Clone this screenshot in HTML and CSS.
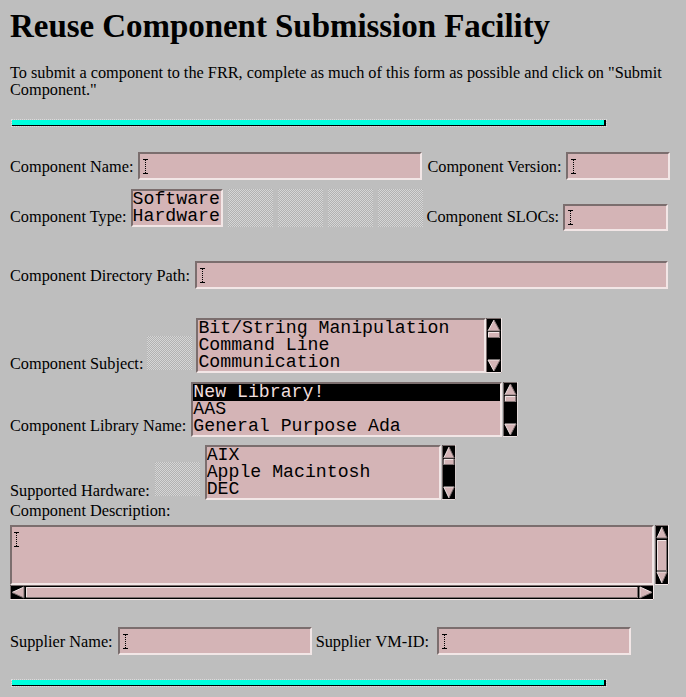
FILE: index.html
```html
<!DOCTYPE html>
<html>
<head>
<meta charset="utf-8">
<title>Reuse Component Submission Facility</title>
<link rel="stylesheet" href="styles.css">
</head>
<body>
<h1 class="title">Reuse Component Submission Facility</h1>
<p class="intro">To submit a component to the FRR, complete as much of this form as possible and click on "Submit<br>Component."</p>
<div class="rule"><div class="rule-fill"></div></div>

<div class="form">
  <div class="row row-1">
    <span class="label lb-5">Component Name:</span>
    <span class="field w-name"><svg class="caret" width="5" height="15" viewBox="0 0 5 15"><path d="M0 0.5h5M0 14.5h5" stroke="#000"/><path d="M2.5 1v13" stroke="#000" stroke-dasharray="1 1"/></svg></span>
    <span class="label lb-5">Component Version:</span>
    <span class="field w-version"><svg class="caret" width="5" height="15" viewBox="0 0 5 15"><path d="M0 0.5h5M0 14.5h5" stroke="#000"/><path d="M2.5 1v13" stroke="#000" stroke-dasharray="1 1"/></svg></span>
  </div>

  <div class="row row-2">
    <span class="label lb-6">Component Type:</span>
    <div class="listbox type-list mb-4">
      <div class="item">Software</div>
      <div class="item">Hardware</div>
    </div>
    <span class="dither d-type mb-4"></span>
    <span class="dither d-type mb-4"></span>
    <span class="dither d-type mb-4"></span>
    <span class="dither d-type mb-4"></span>
    <span class="label lb-6">Component SLOCs:</span>
    <span class="field w-sloc"><svg class="caret" width="5" height="15" viewBox="0 0 5 15"><path d="M0 0.5h5M0 14.5h5" stroke="#000"/><path d="M2.5 1v13" stroke="#000" stroke-dasharray="1 1"/></svg></span>
  </div>

  <div class="row row-3">
    <span class="label lb-5">Component Directory Path:</span>
    <span class="field w-path"><svg class="caret" width="5" height="15" viewBox="0 0 5 15"><path d="M0 0.5h5M0 14.5h5" stroke="#000"/><path d="M2.5 1v13" stroke="#000" stroke-dasharray="1 1"/></svg></span>
  </div>

  <div class="row row-4">
    <span class="label lb-1">Component Subject:</span>
    <span class="dither d-small mb-3"></span>
    <div class="scrolllist">
      <div class="listbox w-subject">
        <div class="item">Bit/String Manipulation</div>
        <div class="item">Command Line</div>
        <div class="item">Communication</div>
      </div>
      <svg class="vscroll" width="16" height="55" viewBox="0 0 16 55">
        <rect x="0" y="0" width="16" height="55" fill="#000"/>
        <path d="M0.5 55V0.5H16" fill="none" stroke="#7b6e6e"/>
        <path d="M15.5 0V54.5H0" fill="none" stroke="#f2e6e6"/>
        <path d="M8 2L2 13H14Z" fill="#d4b4b6"/>
        <path d="M8 2L2 13" stroke="#f2e6e6"/>
        <path d="M8 2L14 13H2" fill="none" stroke="#7b6e6e"/>
        <rect x="2" y="14" width="12" height="6" fill="#d4b4b6"/>
        <path d="M2.5 20V14.5H14" fill="none" stroke="#f2e6e6"/>
        <path d="M13.5 14V19.5H2" fill="none" stroke="#7b6e6e"/>
        <path d="M8 53L2 42H14Z" fill="#d4b4b6"/>
        <path d="M2 42H14M2 42L8 53" fill="none" stroke="#f2e6e6"/>
        <path d="M8 53L14 42" stroke="#7b6e6e"/>
      </svg>
    </div>
  </div>

  <div class="row row-5">
    <span class="label lb-3">Component Library Name:</span>
    <div class="scrolllist">
      <div class="listbox w-library">
        <div class="item selected">New Library!</div>
        <div class="item">AAS</div>
        <div class="item">General Purpose Ada</div>
      </div>
      <svg class="vscroll gap" width="15" height="55" viewBox="0 0 16 55" preserveAspectRatio="none">
        <rect x="0" y="0" width="16" height="55" fill="#000"/>
        <path d="M0.5 55V0.5H16" fill="none" stroke="#7b6e6e"/>
        <path d="M15.5 0V54.5H0" fill="none" stroke="#f2e6e6"/>
        <path d="M8 2L2 13H14Z" fill="#d4b4b6"/>
        <path d="M8 2L2 13" stroke="#f2e6e6"/>
        <path d="M8 2L14 13H2" fill="none" stroke="#7b6e6e"/>
        <rect x="2" y="14" width="12" height="6" fill="#d4b4b6"/>
        <path d="M2.5 20V14.5H14" fill="none" stroke="#f2e6e6"/>
        <path d="M13.5 14V19.5H2" fill="none" stroke="#7b6e6e"/>
        <path d="M8 53L2 42H14Z" fill="#d4b4b6"/>
        <path d="M2 42H14M2 42L8 53" fill="none" stroke="#f2e6e6"/>
        <path d="M8 53L14 42" stroke="#7b6e6e"/>
      </svg>
    </div>
  </div>

  <div class="row row-6">
    <span class="label lb-1">Supported Hardware:</span>
    <span class="dither d-small mb-4"></span>
    <div class="scrolllist">
      <div class="listbox w-hardware">
        <div class="item">AIX</div>
        <div class="item">Apple Macintosh</div>
        <div class="item">DEC</div>
      </div>
      <svg class="vscroll gap" width="14" height="55" viewBox="0 0 16 55" preserveAspectRatio="none">
        <rect x="0" y="0" width="16" height="55" fill="#000"/>
        <path d="M0.5 55V0.5H16" fill="none" stroke="#7b6e6e"/>
        <path d="M15.5 0V54.5H0" fill="none" stroke="#f2e6e6"/>
        <path d="M8 2L2 13H14Z" fill="#d4b4b6"/>
        <path d="M8 2L2 13" stroke="#f2e6e6"/>
        <path d="M8 2L14 13H2" fill="none" stroke="#7b6e6e"/>
        <rect x="2" y="14" width="12" height="6" fill="#d4b4b6"/>
        <path d="M2.5 20V14.5H14" fill="none" stroke="#f2e6e6"/>
        <path d="M13.5 14V19.5H2" fill="none" stroke="#7b6e6e"/>
        <path d="M8 53L2 42H14Z" fill="#d4b4b6"/>
        <path d="M2 42H14M2 42L8 53" fill="none" stroke="#f2e6e6"/>
        <path d="M8 53L14 42" stroke="#7b6e6e"/>
      </svg>
    </div>
  </div>

  <div class="desc-label">Component Description:</div>
  <div class="textarea">
    <div class="ta-body"><svg class="caret" width="5" height="15" viewBox="0 0 5 15"><path d="M0 0.5h5M0 14.5h5" stroke="#000"/><path d="M2.5 1v13" stroke="#000" stroke-dasharray="1 1"/></svg></div>
    <svg class="ta-v" width="14" height="60" viewBox="0 0 14 60">
      <rect x="0" y="0" width="14" height="60" fill="#000"/>
      <path d="M0.5 60V0.5H14" fill="none" stroke="#7b6e6e"/>
      <path d="M13.5 0V59.5H0" fill="none" stroke="#f2e6e6"/>
      <path d="M7 2L2 13H12Z" fill="#d4b4b6"/>
      <path d="M7 2L2 13" stroke="#f2e6e6"/>
      <path d="M7 2L12 13H2" fill="none" stroke="#7b6e6e"/>
      <rect x="2" y="15" width="10" height="31" fill="#d4b4b6"/>
      <path d="M2.5 46V15.5H12" fill="none" stroke="#f2e6e6"/>
      <path d="M11.5 15V45.5H2" fill="none" stroke="#7b6e6e"/>
      <path d="M7 58L2 47H12Z" fill="#d4b4b6"/>
      <path d="M2 47H12M2 47L7 58" fill="none" stroke="#f2e6e6"/>
      <path d="M7 58L12 47" stroke="#7b6e6e"/>
    </svg>
    <svg class="ta-h" width="644" height="15" viewBox="0 0 644 15">
      <rect x="0" y="0" width="644" height="15" fill="#000"/>
      <path d="M0.5 15V0.5H644" fill="none" stroke="#7b6e6e"/>
      <path d="M643.5 0V14.5H0" fill="none" stroke="#f2e6e6"/>
      <path d="M2 7.5L14 2V13Z" fill="#d4b4b6"/>
      <path d="M2 7.5L14 2" stroke="#f2e6e6"/>
      <path d="M14 2V13L2 7.5" fill="none" stroke="#7b6e6e"/>
      <rect x="16" y="2" width="612" height="11" fill="#d4b4b6"/>
      <path d="M16.5 13V2.5H628" fill="none" stroke="#f2e6e6"/>
      <path d="M627.5 2V12.5H16" fill="none" stroke="#7b6e6e"/>
      <path d="M642 7.5L630 2V13Z" fill="#d4b4b6"/>
      <path d="M630 13V2L642 7.5" fill="none" stroke="#f2e6e6"/>
      <path d="M642 7.5L630 13" stroke="#7b6e6e"/>
    </svg>
  </div>

  <div class="row row-supplier">
    <span class="label lb-5">Supplier Name:</span>
    <span class="field w-supplier"><svg class="caret" width="5" height="15" viewBox="0 0 5 15"><path d="M0 0.5h5M0 14.5h5" stroke="#000"/><path d="M2.5 1v13" stroke="#000" stroke-dasharray="1 1"/></svg></span>
    <span class="label lb-5 vmid">Supplier VM-ID:</span>
    <span class="field w-supplier"><svg class="caret" width="5" height="15" viewBox="0 0 5 15"><path d="M0 0.5h5M0 14.5h5" stroke="#000"/><path d="M2.5 1v13" stroke="#000" stroke-dasharray="1 1"/></svg></span>
  </div>
</div>

<div class="rule rule-bottom"><div class="rule-fill"></div></div>
</body>
</html>
```

FILE: styles.css
```css
html, body {
  margin: 0;
  padding: 0;
}

body {
  background: #bebebe;
  color: #000;
  font-family: "Liberation Serif", "Times New Roman", serif;
  font-size: 16.3px;
  line-height: 17px;
  padding: 0 10px;
  width: 686px;
  box-sizing: border-box;
}

.title {
  font-size: 33px;
  line-height: 38px;
  font-weight: bold;
  letter-spacing: -0.05px;
  margin: 7px 0 0;
}

.intro {
  margin: 19px 0 0;
}

.rule {
  margin-top: 21px;
  margin-left: 1px;
  width: 596px;
  height: 8px;
  box-sizing: border-box;
  border: 1px dotted #dcdcdc;
}

.rule-fill {
  height: 6px;
  box-sizing: border-box;
  background: #00ffde;
  border-bottom: 1px solid #000;
  border-right: 2px solid #000;
}

.rule-bottom {
  margin-top: 24px;
}

.row {
  display: flex;
  align-items: flex-end;
  gap: 5px;
}

.row-1 { margin-top: 25px; }
.row-2 { margin-top: 9px; gap: 4px; }
.row-3 { margin-top: 30px; }
.row-4 { margin-top: 29px; gap: 4px; }
.row-5 { margin-top: 9px; }
.row-6 { margin-top: 8px; }
.row-supplier { margin-top: 27px; }

.label {
  white-space: nowrap;
}

.vmid {
  margin-left: -1px;
  margin-right: 3px;
  word-spacing: 1px;
}

.lb-1 { margin-bottom: 1px; }
.lb-3 { margin-bottom: 3px; }
.lb-5 { margin-bottom: 5px; }
.lb-6 { margin-bottom: 6px; }
.mb-3 { margin-bottom: 3px; }
.mb-4 { margin-bottom: 4px; }

.field {
  box-sizing: border-box;
  height: 28px;
  background: #d4b4b6;
  border: 2px solid;
  border-color: #7b6e6e #f2e6e6 #f2e6e6 #7b6e6e;
  display: flex;
  align-items: center;
  padding-left: 3px;
}

.caret {
  display: block;
}

.w-name { width: 284px; }
.w-version { width: 104px; }
.w-sloc { width: 105px; height: 27px; }
.w-path { width: 473px; }
.w-supplier { width: 194px; }

.listbox {
  box-sizing: border-box;
  background: #d4b4b6;
  border: 2px solid;
  border-color: #7b6e6e #f2e6e6 #f2e6e6 #7b6e6e;
  font-family: "Liberation Mono", "Courier New", monospace;
  font-size: 18.2px;
  line-height: 17px;
  overflow: hidden;
}

.item {
  height: 17px;
  white-space: pre;
}

.item.selected {
  background: #000;
  color: #f0dede;
}

.type-list {
  width: 92px;
  height: 38px;
}

.scrolllist {
  display: flex;
  align-items: stretch;
}

.vscroll {
  display: block;
}

.vscroll.gap {
  margin-left: 1px;
}

.w-subject { width: 290px; height: 55px; }
.w-library { width: 311px; height: 55px; }
.w-hardware { width: 236px; height: 55px; }

.dither {
  display: block;
  width: 45px;
  background: repeating-conic-gradient(#d6d6d6 0 25%, #b2b2b2 0 50%) 0 0 / 2px 2px;
}

.d-type {
  height: 38px;
  margin-left: 1px;
}

.d-small {
  height: 34px;
}

.desc-label {
  margin-top: 2px;
}

.textarea {
  margin-top: 6px;
  display: grid;
  grid-template-columns: 644px 14px;
  grid-template-rows: 60px 15px;
  width: 658px;
}

.ta-body {
  box-sizing: border-box;
  background: #d4b4b6;
  border: 2px solid;
  border-color: #7b6e6e #f2e6e6 #f2e6e6 #7b6e6e;
  padding: 5px 0 0 2px;
}

.ta-v {
  display: block;
  margin-left: 1px;
}

.ta-h {
  display: block;
}
```
